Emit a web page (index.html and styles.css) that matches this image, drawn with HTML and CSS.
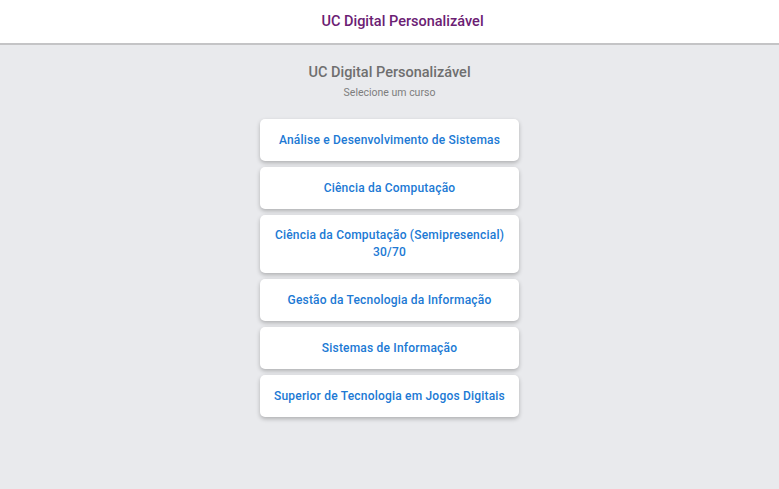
FILE: index.html
```html
<!DOCTYPE html>
<html lang="pt-BR">
<head>
    <meta charset="UTF-8">
    <meta name="viewport" content="width=device-width, initial-scale=1.0">
    <title>UC Digital Personalizável</title>
    <link rel="stylesheet" href="styles.css">
</head>
<body>
    <header id="topbar">
        <h1>UC Digital Personalizável</h1>
    </header>

    <div id="container">
        <h2>UC Digital Personalizável</h2>
        <p class="subtitle">Selecione um curso</p>

        <div id="courses">
            <button class="course">Análise e Desenvolvimento de Sistemas</button>
            <button class="course">Ciência da Computação</button>
            <button class="course">Ciência da Computação (Semipresencial) 30/70</button>
            <button class="course">Gestão da Tecnologia da Informação</button>
            <button class="course">Sistemas de Informação</button>
            <button class="course">Superior de Tecnologia em Jogos Digitais</button>
        </div>
    </div>
</body>
</html>
```

FILE: styles.css
```css
body {
    font-family: Roboto, "Liberation Sans", Arial, sans-serif;
    margin: 0;
    padding: 0;
    background-color: #e9eaed;
    min-height: 489px;
}

#topbar {
    height: 43px;
    background-color: #fff;
    border-bottom: 2px solid #c4c4c6;
    display: flex;
    align-items: center;
    justify-content: center;
}

#topbar h1 {
    margin: 0;
    font-size: 14.5px;
    font-weight: 500;
    color: #6b2073;
    padding-left: 26px;
}

#container {
    display: flex;
    flex-direction: column;
    align-items: center;
    padding-top: 19px;
}

#container h2 {
    margin: 0;
    font-size: 14.5px;
    font-weight: 500;
    color: #6f6f6f;
    line-height: 18px;
}

.subtitle {
    margin: 4px 0 0;
    font-size: 10.5px;
    color: #7d7d7d;
    line-height: 14px;
}

#courses {
    display: flex;
    flex-direction: column;
    gap: 6px;
    width: 259px;
    margin-top: 19px;
}

.course {
    font-family: inherit;
    background-color: #fff;
    border: none;
    border-radius: 5px;
    box-shadow: 0 2px 4px rgba(0, 0, 0, 0.25);
    padding: 12px 10px;
    min-height: 42px;
    font-size: 12px;
    font-weight: 500;
    letter-spacing: 0.2px;
    line-height: 17px;
    color: #2079d4;
    text-align: center;
    cursor: pointer;
}
```
